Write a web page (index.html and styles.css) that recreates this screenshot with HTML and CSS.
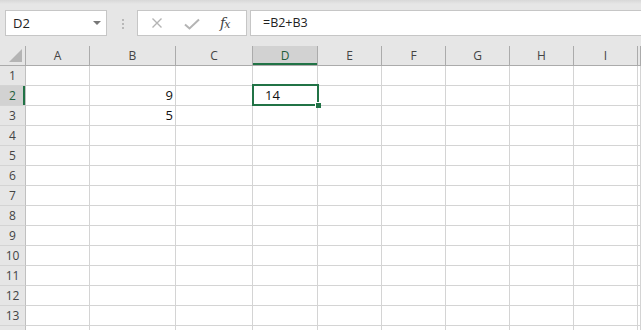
FILE: index.html
```html
<!DOCTYPE html>
<html lang="en">
<head>
  <meta charset="UTF-8" />
  <title>Book1 - Excel</title>
  <link rel="stylesheet" href="styles.css">
</head>
<body>
  <div class="toolbar">
    <div class="namebox">
      <span>D2</span>
      <span class="caret"></span>
    </div>
    <div class="grip"><i></i><i></i><i></i></div>
    <div class="fx-buttons">
      <svg class="icon" width="12" height="12" viewBox="0 0 12 12">
        <path d="M1.5 1.5 L10.5 10.5 M10.5 1.5 L1.5 10.5" stroke="#b4b4b4" stroke-width="1.4" fill="none"/>
      </svg>
      <svg class="icon" width="16" height="12" viewBox="0 0 16 12">
        <path d="M1 6.5 L5.5 10.5 L15 1.5" stroke="#b4b4b4" stroke-width="2" fill="none"/>
      </svg>
      <span class="fx">f<small>x</small></span>
    </div>
    <div class="formula">=B2+B3</div>
  </div>

  <div class="sheet" id="sheet">
    <div class="selection"></div>
    <div class="handle"></div>
  </div>

  <script>
    const cols = ["A", "B", "C", "D", "E", "F", "G", "H", "I", ""];
    const values = { B2: "9", B3: "5", D2: "14" };
    const sheet = document.getElementById("sheet");

    // Header row
    const corner = document.createElement("div");
    corner.className = "corner";
    corner.innerHTML = '<svg width="13" height="13" viewBox="0 0 13 13"><path d="M13 0 L13 13 L0 13 Z" fill="#b4b4b4"/></svg>';
    sheet.appendChild(corner);
    cols.forEach(c => {
      const h = document.createElement("div");
      h.className = "col-head" + (c === "D" ? " active" : "");
      h.textContent = c;
      sheet.appendChild(h);
    });

    // Rows (the 14th only peeks in at the bottom edge)
    for (let r = 1; r <= 14; r++) {
      const rh = document.createElement("div");
      rh.className = "row-head" + (r === 2 ? " active" : "");
      if (r < 14) rh.textContent = r;
      sheet.appendChild(rh);
      cols.forEach(c => {
        const cell = document.createElement("div");
        cell.className = "cell";
        const v = values[c + r];
        if (v) {
          cell.textContent = v;
          cell.classList.add(c === "D" ? "edit" : "num");
        }
        sheet.appendChild(cell);
      });
    }
  </script>
</body>
</html>
```

FILE: styles.css
```css
* {
  box-sizing: border-box;
}

body {
  margin: 0;
  font-family: "Open Sans", "Noto Sans", sans-serif;
  background: #ffffff;
  overflow: hidden;
}

/* formula bar */
.toolbar {
  height: 46px;
  display: flex;
  align-items: flex-start;
  padding: 10px 0 0 5px;
  background: linear-gradient(#d8d8d8, #e6e6e6 4px);
}

.namebox {
  width: 102px;
  height: 26px;
  background: #fff;
  border: 1px solid #c6c6c6;
  display: flex;
  align-items: center;
  justify-content: space-between;
  padding: 0 5px 0 7px;
  font-size: 13px;
  color: #222;
}

.caret {
  width: 0;
  height: 0;
  border-left: 4px solid transparent;
  border-right: 4px solid transparent;
  border-top: 4px solid #777;
}

.grip {
  width: 2px;
  margin: 9px 13px 0 15px;
  display: flex;
  flex-direction: column;
  gap: 2px;
}

.grip i {
  display: block;
  width: 2px;
  height: 2px;
  background: #b8b8b8;
}

.fx-buttons {
  width: 110px;
  height: 26px;
  background: #fff;
  border: 1px solid #c6c6c6;
  display: flex;
  align-items: center;
  padding: 0 0 0 13px;
}

.fx-buttons .icon:nth-child(1) {
  margin-right: 21px;
}

.fx-buttons .icon:nth-child(2) {
  margin-top: 2px;
  margin-right: 20px;
}

.fx {
  font-family: "DejaVu Serif", "Liberation Serif", serif;
  font-style: italic;
  font-size: 14px;
  color: #444;
  letter-spacing: -1px;
}

.fx small {
  font-size: 11px;
}

.formula {
  flex: 1;
  height: 26px;
  margin-left: 3px;
  background: #fff;
  border: 1px solid #c6c6c6;
  border-right: none;
  padding: 0 0 0 12px;
  font-size: 12.5px;
  line-height: 24px;
  color: #222;
}

/* grid */
.sheet {
  position: relative;
  display: grid;
  grid-template-columns: 26px 64px 86px 77px 65px 64px 64px 64px 64px 64px 1fr;
  grid-auto-rows: 20px;
  overflow: hidden;
}

.corner,
.col-head {
  background: #e6e6e6;
  border-bottom: 1px solid #ababab;
}

.corner {
  border-right: 1px solid #ababab;
  display: flex;
  align-items: flex-end;
  justify-content: flex-end;
  padding: 0 3px 3px 0;
}

.col-head {
  border-right: 1px solid #ababab;
  text-align: center;
  font-size: 12px;
  line-height: 19px;
  color: #444;
}

.row-head {
  background: #e6e6e6;
  border-right: 1px solid #c0c0c0;
  border-bottom: 1px solid #d4d4d4;
  text-align: center;
  font-size: 12px;
  line-height: 19px;
  color: #444;
}

.col-head.active {
  background: #d2d2d2;
  color: #1e5e3b;
  box-shadow: inset 0 -2px #217346;
}

.row-head.active {
  background: #d2d2d2;
  color: #1e5e3b;
  box-shadow: inset -2px 0 #217346;
}

.cell {
  border-right: 1px solid #d4d4d4;
  border-bottom: 1px solid #d4d4d4;
  font-size: 13px;
  line-height: 19px;
  color: #111;
}

.cell.num {
  text-align: right;
  padding-right: 2px;
}

.cell.edit {
  padding-left: 12px;
}

.selection {
  position: absolute;
  left: 252px;
  top: 38px;
  width: 67px;
  height: 22px;
  border: 2px solid #217346;
  pointer-events: none;
}

.handle {
  position: absolute;
  left: 315px;
  top: 56px;
  width: 6px;
  height: 6px;
  background: #217346;
  border-left: 1px solid #fff;
  border-top: 1px solid #fff;
}
```
